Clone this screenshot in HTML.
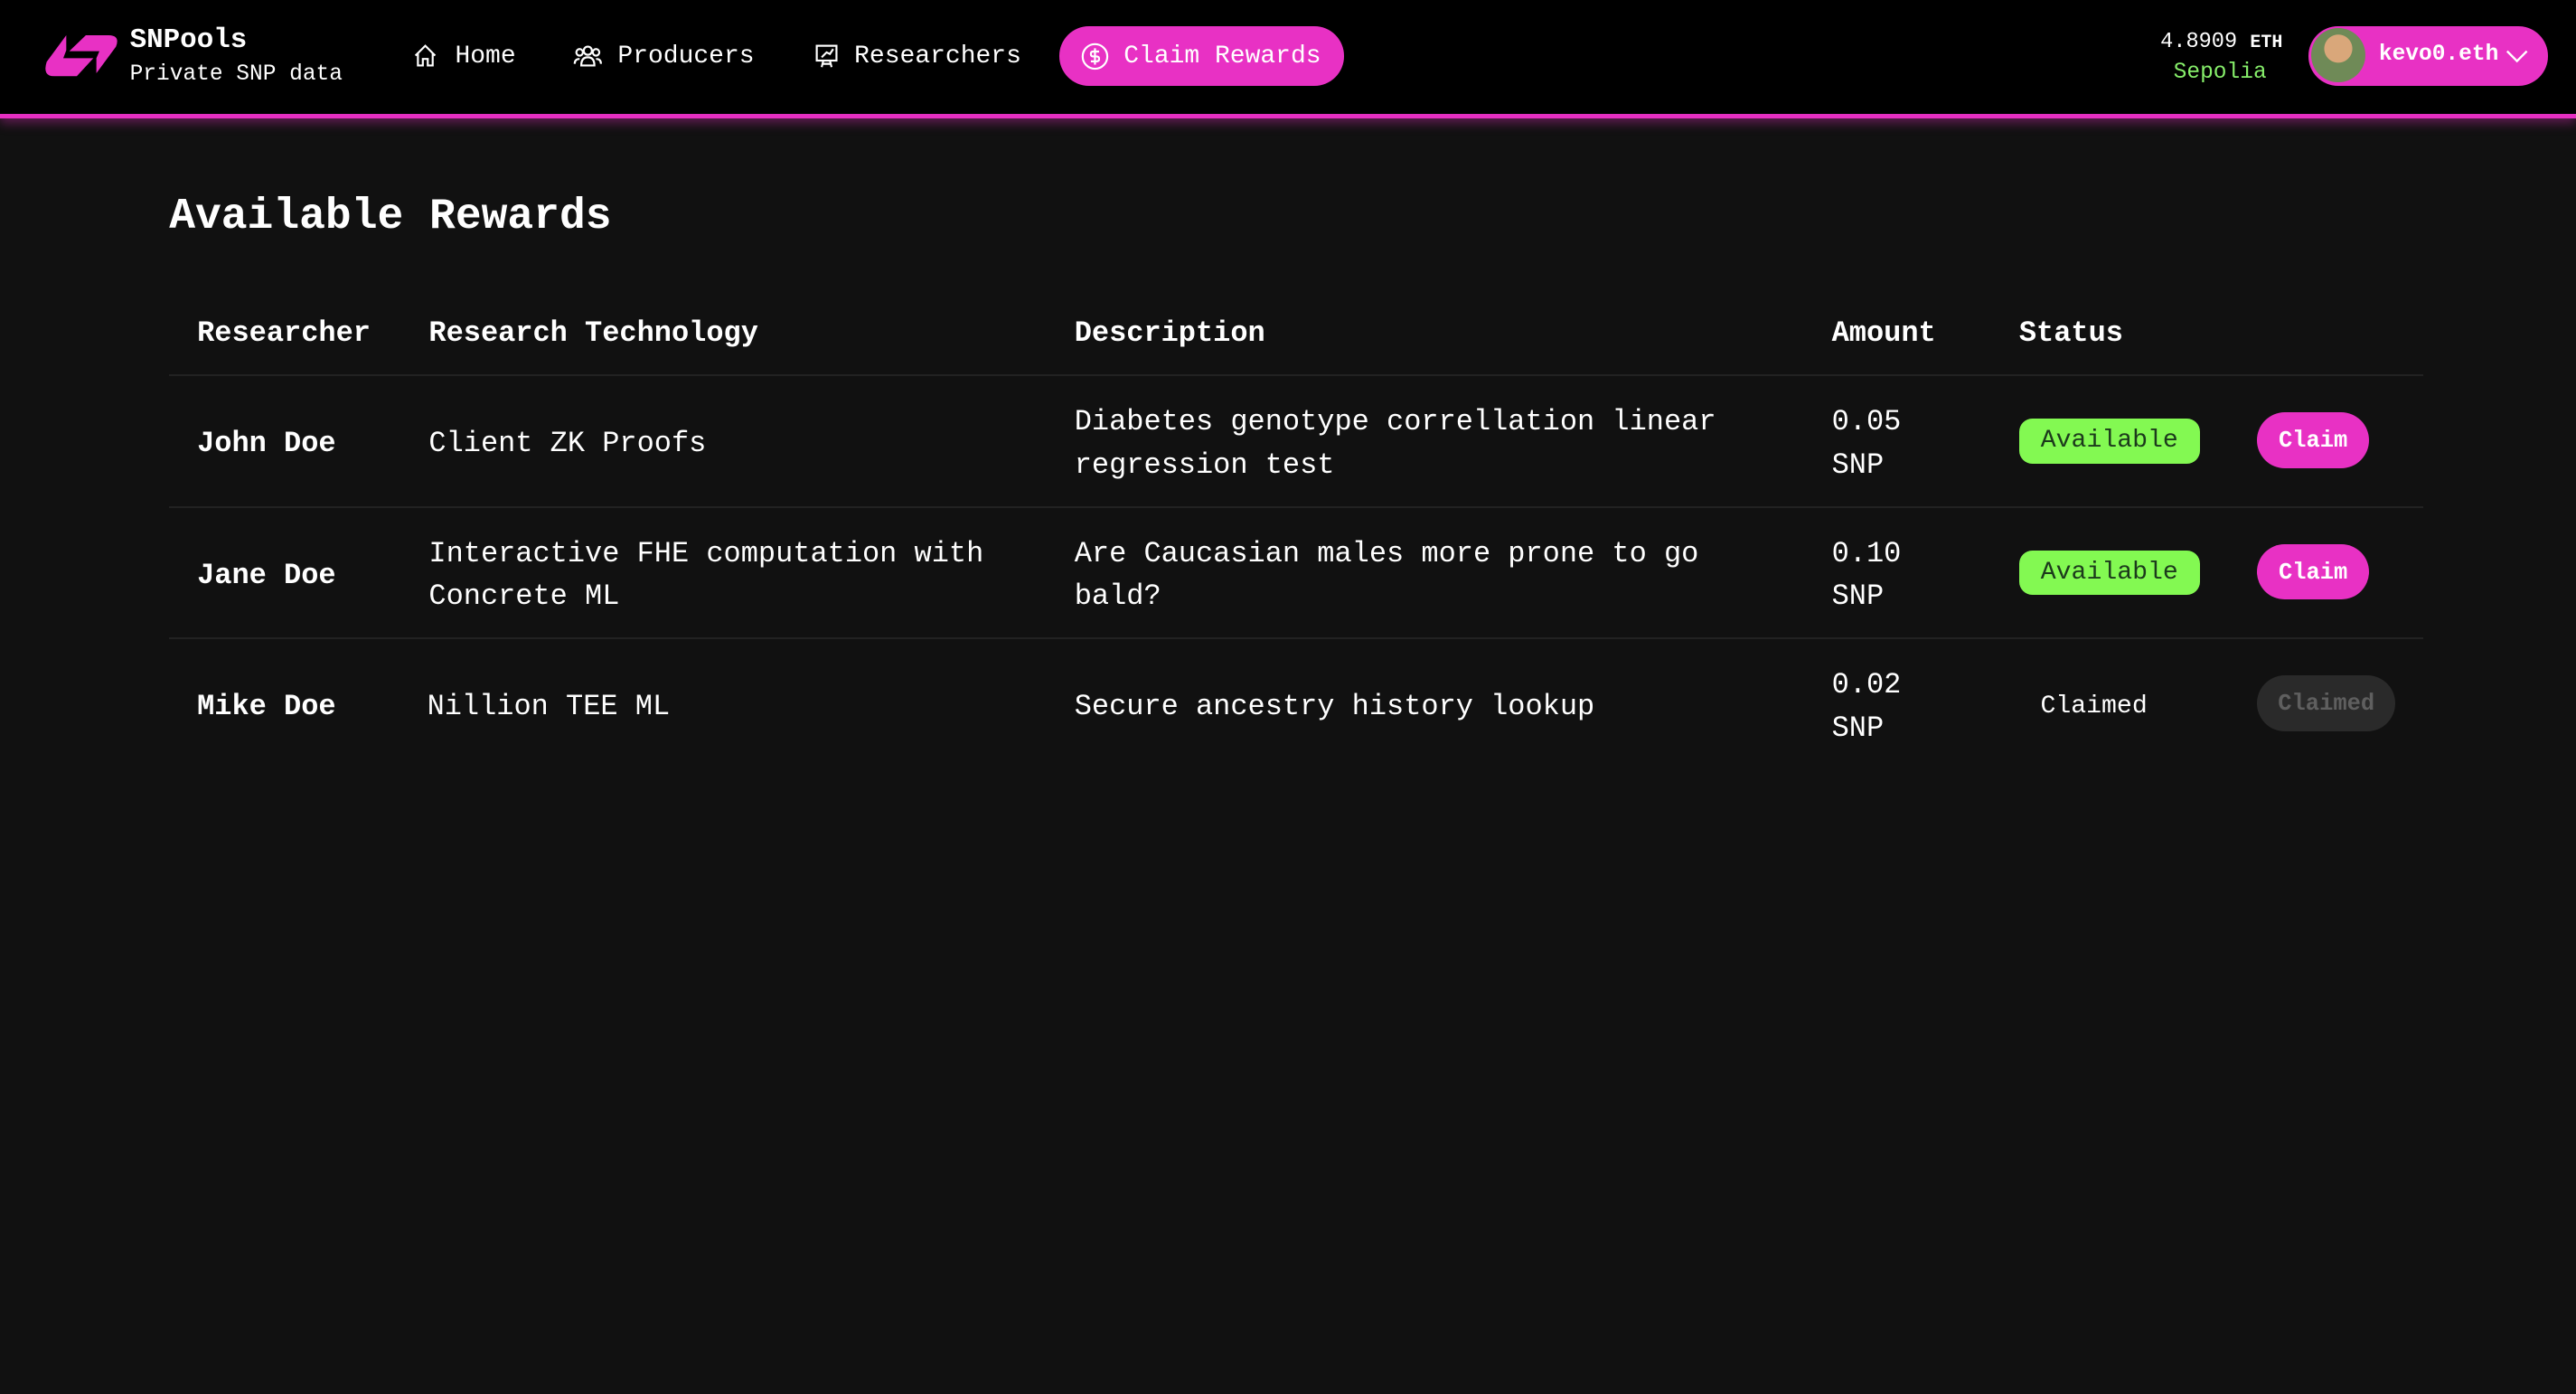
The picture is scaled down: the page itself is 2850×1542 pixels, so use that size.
<!DOCTYPE html>
<html><head><meta charset="utf-8"><style>
*{margin:0;padding:0;box-sizing:border-box}
html,body{width:2850px;height:1542px;overflow:hidden;background:#111}
#root{zoom:1.81760;width:1568px;height:849px;position:relative;background:#111;font-family:"Liberation Mono",monospace;color:#fff}
.hdr{position:absolute;left:0;top:0;width:1568px;height:72px;background:#000;border-bottom:3px solid #e52fc1;box-shadow:0 3px 6px rgba(229,47,193,.35)}
.abs{position:absolute;white-space:nowrap}
.nav{font-size:15.4px;top:26px}
.pill{position:absolute;background:#e831c4;border-radius:18px}
.t{position:absolute;font-size:17.6px;line-height:26px;white-space:nowrap}
.b{font-weight:bold}
.sep{position:absolute;left:103px;width:1372px;height:1px;background:#222}
.av{position:absolute;left:1229px;width:110px;height:27px;background:#83f952;color:#1c3a1c;border-radius:8px;font-size:15.5px;text-align:center;line-height:28px}
.cl{position:absolute;left:1374px;width:68px;height:34px;background:#e831c4;border-radius:17px;font-size:14px;font-weight:bold;text-align:center;line-height:35px}
</style></head><body><div id="root">
<div class="hdr">
<svg class="abs" style="left:22px;top:14px" width="55" height="38.5" viewBox="0 0 300 210"><path d="M100,42 V92 L90,118 H190 L135,178 H60 Q20,178 35,130 Z" fill="#e831c4"/><path d="M200,168 V118 L210,95 H110 L165,42 H240 Q280,42 265,80 Z" fill="#e831c4"/></svg>
<div class="abs b" style="left:79px;top:15px;font-size:17px">SNPools</div>
<div class="abs" style="left:79px;top:38px;font-size:13.5px">Private SNP data</div>
<svg class="abs" style="left:251px;top:26px" width="16" height="16" viewBox="0 0 16 16" fill="none" stroke="#fff" stroke-width="1.2"><path d="M2 8 L8 2 L14 8 M3.5 6.5 V14 H6.5 V10 H9.5 V14 H12.5 V6.5"/></svg>
<div class="abs nav" style="left:277px">Home</div>
<svg class="abs" style="left:349px;top:26px" width="18" height="16" viewBox="0 0 18 16" fill="none" stroke="#fff" stroke-width="1.2"><circle cx="9" cy="5" r="2.5"/><circle cx="4" cy="6" r="2"/><circle cx="14" cy="6" r="2"/><path d="M5 14 Q5 9 9 9 Q13 9 13 14 Z M1 13 Q1 10 4 10 M17 13 Q17 10 14 10"/></svg>
<div class="abs nav" style="left:376px">Producers</div>
<svg class="abs" style="left:495px;top:26px" width="16" height="16" viewBox="0 0 16 16" fill="none" stroke="#fff" stroke-width="1.2"><rect x="2" y="2" width="12" height="9"/><path d="M5 9 L8 6 L10 7 L12 4 M6 11 L5 15 M10 11 L11 15 M5 13 H11"/></svg>
<div class="abs nav" style="left:520px">Researchers</div>
<div class="pill" style="left:645px;top:16px;width:173px;height:36px"></div>
<svg class="abs" style="left:658px;top:26px" width="17" height="17" viewBox="0 0 17 17" fill="none" stroke="#fff" stroke-width="1.2"><circle cx="8.5" cy="8.5" r="7.5"/><path d="M11 5.5 H7.3 Q6 5.5 6 7 Q6 8.5 7.5 8.5 H9.5 Q11 8.5 11 10 Q11 11.5 9.5 11.5 H6 M8.5 3.5 V13.5"/></svg>
<div class="abs nav" style="left:684px">Claim Rewards</div>
<div class="abs" style="left:1315px;top:18px;font-size:13px">4.8909 <b style="font-size:11px">ETH</b></div>
<div class="abs" style="left:1323px;top:37px;font-size:13.5px;color:#86ee6a">Sepolia</div>
<div class="pill" style="left:1405px;top:16px;width:146px;height:36px"></div>
<div class="abs" style="left:1407px;top:17px;width:33px;height:33px;border-radius:50%;background:radial-gradient(circle at 50% 38%,#d9a77a 0 32%,#6f8a57 33% 100%)"></div>
<div class="abs b" style="left:1448px;top:26px;font-size:13.5px">kevo0.eth</div>
<svg class="abs" style="left:1525px;top:29px" width="14" height="10" viewBox="0 0 14 10" fill="none" stroke="#fff" stroke-width="1.3"><path d="M1 2 L7 8 L13 2"/></svg>
</div>
<div class="abs b" style="left:103px;top:117px;font-size:26.4px">Available Rewards</div>
<div class="t b" style="left:120px;top:190px">Researcher</div>
<div class="t b" style="left:261px;top:190px">Research Technology</div>
<div class="t b" style="left:654px;top:190px">Description</div>
<div class="t b" style="left:1115px;top:190px">Amount</div>
<div class="t b" style="left:1229px;top:190px">Status</div>
<div class="sep" style="top:228px"></div>
<div class="t b" style="left:120px;top:257px">John Doe</div>
<div class="t" style="left:261px;top:257px">Client ZK Proofs</div>
<div class="t" style="left:654px;top:244px">Diabetes genotype correllation linear<br>regression test</div>
<div class="t" style="left:1115px;top:244px">0.05<br>SNP</div>
<div class="av" style="top:255px">Available</div>
<div class="cl" style="top:251px">Claim</div>
<div class="sep" style="top:308px"></div>
<div class="t b" style="left:120px;top:337px">Jane Doe</div>
<div class="t" style="left:261px;top:324px">Interactive FHE computation with<br>Concrete ML</div>
<div class="t" style="left:654px;top:324px">Are Caucasian males more prone to go<br>bald?</div>
<div class="t" style="left:1115px;top:324px">0.10<br>SNP</div>
<div class="av" style="top:335px">Available</div>
<div class="cl" style="top:331px">Claim</div>
<div class="sep" style="top:388px"></div>
<div class="t b" style="left:120px;top:417px">Mike Doe</div>
<div class="t" style="left:260px;top:417px">Nillion TEE ML</div>
<div class="t" style="left:654px;top:417px">Secure ancestry history lookup</div>
<div class="t" style="left:1115px;top:404px">0.02<br>SNP</div>
<div class="t" style="left:1242px;top:417px;font-size:15.5px">Claimed</div>
<div class="cl" style="top:411px;width:84px;background:#2a2a2a;color:#5f5f5f">Claimed</div>
</div></body></html>
